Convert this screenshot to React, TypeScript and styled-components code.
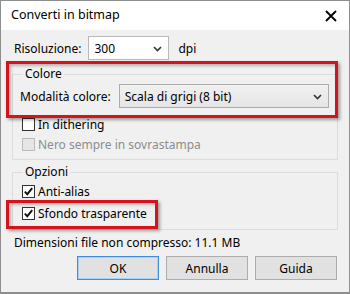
import styled, { createGlobalStyle } from 'styled-components';

const GlobalStyle = createGlobalStyle`
  html, body {
    margin: 0;
    padding: 0;
    background: #ffffff;
  }
  * {
    box-sizing: border-box;
  }
`;

function Chevron() {
  return (
    <svg width="9" height="6" viewBox="0 0 9 6">
      <path d="M1 1 L4.5 4.5 L8 1" fill="none" stroke="#333" strokeWidth="1.6" />
    </svg>
  );
}

function CheckMark() {
  return (
    <svg width="11" height="11" viewBox="0 0 11 11">
      <path d="M1.8 5.6 L4.3 8.2 L9.2 2.2" fill="none" stroke="#111" strokeWidth="1.9" />
    </svg>
  );
}

interface ICheck {
  label: string;
  checked?: boolean;
  disabled?: boolean;
}

function Check({ label, checked, disabled }: ICheck) {
  return (
    <CheckRow $disabled={disabled}>
      <Box $disabled={disabled}>{checked && <CheckMark />}</Box>
      <span>{label}</span>
    </CheckRow>
  );
}

export default function App() {
  return (
    <>
      <GlobalStyle />
      <Window>
        <TitleBar>
          <Title>Converti in bitmap</Title>
          <Close>
            <svg width="12" height="12" viewBox="0 0 12 12">
              <path d="M1 1 L11 11 M11 1 L1 11" stroke="#000" strokeWidth="1.8" />
            </svg>
          </Close>
        </TitleBar>
        <Body>
          <FieldRow>
            <Label>Risoluzione:</Label>
            <Combo $width={81} $editable>
              <span>300</span>
              <Chevron />
            </Combo>
            <Unit>dpi</Unit>
          </FieldRow>

          <Group>
            <Legend>Colore</Legend>
            <FieldRow $inGroup>
              <Label $gap={8}>Modalità colore:</Label>
              <Combo $width={210}>
                <span>Scala di grigi (8 bit)</span>
                <Chevron />
              </Combo>
            </FieldRow>
            <CheckList $top={6} $gap={0}>
              <Check label="In dithering" />
              <Check label="Nero sempre in sovrastampa" disabled />
            </CheckList>
          </Group>

          <Group $last>
            <Legend>Opzioni</Legend>
            <CheckList $top={1} $gap={2}>
              <Check label="Anti-alias" checked />
              <Check label="Sfondo trasparente" checked />
            </CheckList>
          </Group>

          <Info>Dimensioni file non compresso: 11.1 MB</Info>

          <Buttons>
            <Button $default>OK</Button>
            <Button>Annulla</Button>
            <Button>Guida</Button>
          </Buttons>
        </Body>

        <Highlight $left={5} $top={60} $width={332} $height={57} />
        <Highlight $left={5} $top={199} $width={152} $height={29} />
      </Window>
    </>
  );
}

const Window = styled.div`
  position: relative;
  width: 350px;
  height: 294px;
  border: 1px solid #8e8e8e;
  border-bottom-width: 2px;
  background: #f0f0f0;
  font-family: 'Noto Sans', 'Open Sans', sans-serif;
  font-size: 12px;
  color: #000;
  overflow: hidden;
`;

const TitleBar = styled.div`
  height: 29px;
  background: #ffffff;
  display: flex;
  align-items: center;
  justify-content: space-between;
  padding: 0 12px 2px 10px;
`;

const Title = styled.div`
  font-size: 12.5px;
`;

const Close = styled.div`
  display: flex;
  align-items: center;
  margin-top: 2px;
`;

const Body = styled.div`
  padding: 6px 11px 0 11px;
  display: flex;
  flex-direction: column;
`;

const FieldRow = styled.div<{ $inGroup?: boolean }>`
  display: flex;
  align-items: center;
  height: 24px;
  margin-left: ${(p) => (p.$inGroup ? '0' : '2px')};
  margin-top: ${(p) => (p.$inGroup ? '2px' : '0')};
`;

const Label = styled.span<{ $gap?: number }>`
  margin-right: ${(p) => p.$gap ?? 7}px;
  white-space: nowrap;
`;

const Unit = styled.span`
  margin-left: 9px;
`;

const Combo = styled.div<{ $width: number; $editable?: boolean }>`
  width: ${(p) => p.$width}px;
  height: 24px;
  display: flex;
  align-items: center;
  justify-content: space-between;
  padding: 0 6px 0 5px;
  border: 1px solid ${(p) => (p.$editable ? '#b9b9b9' : '#acacac')};
  background: ${(p) => (p.$editable ? '#ffffff' : 'linear-gradient(#f0f0f0, #e5e5e5)')};
  white-space: nowrap;

  svg {
    flex-shrink: 0;
    margin-top: 1px;
  }
`;

const Group = styled.fieldset<{ $last?: boolean }>`
  margin: ${(p) => (p.$last ? '4px' : '6px')} 0 0 0;
  padding: 0 8px ${(p) => (p.$last ? '6px' : '5px')} 7px;
  border: 1px solid #dcdcdc;
  min-width: 0;
`;

const Legend = styled.legend`
  margin-left: 3px;
  padding: 0 2px;
  line-height: 16px;
`;

const CheckList = styled.div<{ $top: number; $gap: number }>`
  display: flex;
  flex-direction: column;
  gap: ${(p) => p.$gap}px;
  margin-top: ${(p) => p.$top}px;
`;

const CheckRow = styled.div<{ $disabled?: boolean }>`
  display: flex;
  align-items: center;
  height: 20px;
  padding-left: 2px;
  color: ${(p) => (p.$disabled ? '#8d8d8d' : '#000')};
`;

const Box = styled.div<{ $disabled?: boolean }>`
  width: 13px;
  height: 13px;
  margin-right: 3px;
  border: 1px solid ${(p) => (p.$disabled ? '#bcbcbc' : '#333333')};
  background: ${(p) => (p.$disabled ? '#e6e6e6' : '#ffffff')};
  display: flex;
  align-items: center;
  justify-content: center;
`;

const Info = styled.div`
  margin: 5px 0 0 2px;
  line-height: 16px;
`;

const Buttons = styled.div`
  display: flex;
  justify-content: flex-end;
  gap: 7px;
  margin: 5px 1px 0 0;
`;

const Button = styled.div<{ $default?: boolean }>`
  width: 82px;
  height: 24px;
  display: flex;
  align-items: center;
  justify-content: center;
  background: #e1e1e1;
  border: 1px solid ${(p) => (p.$default ? '#3c8fdc' : '#adadad')};
  box-shadow: ${(p) => (p.$default ? 'inset 0 0 0 1px #a9d1f3' : 'none')};
`;

const Highlight = styled.div<{ $left: number; $top: number; $width: number; $height: number }>`
  position: absolute;
  left: ${(p) => p.$left}px;
  top: ${(p) => p.$top}px;
  width: ${(p) => p.$width}px;
  height: ${(p) => p.$height}px;
  border: 3px solid #d4141c;
  box-shadow: 2px 2px 3px rgba(0, 0, 0, 0.35), inset 2px 2px 3px rgba(0, 0, 0, 0.25);
  pointer-events: none;
`;
